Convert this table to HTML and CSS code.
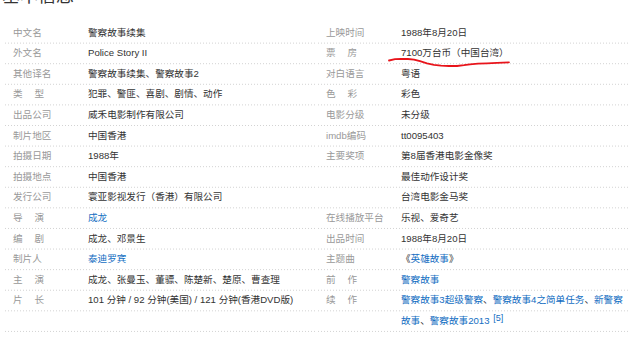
FILE: index.html
```html
<!DOCTYPE html>
<html lang="zh-CN">
<head>
<meta charset="utf-8">
<title>基本信息</title>
<link rel="stylesheet" href="styles.css">
</head>
<body>
<div class="page">
  <h2 class="title">基本信息</h2>
  <div class="basic">
    <dl class="col">
      <div class="row"><dt>中文名</dt><dd>警察故事续集</dd></div>
      <div class="row"><dt>外文名</dt><dd>Police Story II</dd></div>
      <div class="row"><dt>其他译名</dt><dd>警察故事续集、警察故事2</dd></div>
      <div class="row"><dt>类<i class="gap"></i>型</dt><dd>犯罪、警匪、喜剧、剧情、动作</dd></div>
      <div class="row"><dt>出品公司</dt><dd>威禾电影制作有限公司</dd></div>
      <div class="row"><dt>制片地区</dt><dd>中国香港</dd></div>
      <div class="row"><dt>拍摄日期</dt><dd>1988年</dd></div>
      <div class="row"><dt>拍摄地点</dt><dd>中国香港</dd></div>
      <div class="row"><dt>发行公司</dt><dd>寰亚影视发行（香港）有限公司</dd></div>
      <div class="row"><dt>导<i class="gap"></i>演</dt><dd><a href="#">成龙</a></dd></div>
      <div class="row"><dt>编<i class="gap"></i>剧</dt><dd>成龙、邓景生</dd></div>
      <div class="row"><dt>制片人</dt><dd><a href="#">泰迪罗宾</a></dd></div>
      <div class="row"><dt>主<i class="gap"></i>演</dt><dd>成龙、张曼玉、董骠、陈楚新、楚原、曹查理</dd></div>
      <div class="row"><dt>片<i class="gap"></i>长</dt><dd>101 分钟 / 92 分钟(美国) / 121 分钟(香港DVD版)</dd></div>
    </dl>
    <dl class="col">
      <div class="row"><dt>上映时间</dt><dd>1988年8月20日</dd></div>
      <div class="row"><dt>票<i class="gap"></i>房</dt><dd>7100万台币（中国台湾）</dd></div>
      <div class="row"><dt>对白语言</dt><dd>粤语</dd></div>
      <div class="row"><dt>色<i class="gap"></i>彩</dt><dd>彩色</dd></div>
      <div class="row"><dt>电影分级</dt><dd>未分级</dd></div>
      <div class="row"><dt>imdb编码</dt><dd>tt0095403</dd></div>
      <div class="row"><dt>主要奖项</dt><dd>第8届香港电影金像奖</dd></div>
      <div class="row"><dt></dt><dd>最佳动作设计奖</dd></div>
      <div class="row"><dt></dt><dd>台湾电影金马奖</dd></div>
      <div class="row"><dt>在线播放平台</dt><dd>乐视、爱奇艺</dd></div>
      <div class="row"><dt>出品时间</dt><dd>1988年8月20日</dd></div>
      <div class="row"><dt>主题曲</dt><dd>《<a href="#">英雄故事</a>》</dd></div>
      <div class="row"><dt>前<i class="gap"></i>作</dt><dd><a href="#">警察故事</a></dd></div>
      <div class="row"><dt>续<i class="gap"></i>作</dt><dd><a href="#">警察故事3超级警察</a>、<a href="#">警察故事4之简单任务</a>、<a href="#">新警察<br>故事</a>、<a href="#">警察故事2013</a> <sup><a href="#">[5]</a></sup></dd></div>
    </dl>
  </div>
  <svg class="mark" width="640" height="80" viewBox="0 0 640 80" aria-hidden="true">
    <polyline points="389,60.5 395,59.2 401,58.8 408,59 414,59.6 420,61.2 427,63.3 434,64.8 441,65.7 449,66 457,66 464,65.2 470,64.3 478,63.7 487,63.3 497,62.9 509,62.3" fill="none" stroke="#e8141b" stroke-width="1.8" stroke-linecap="round" stroke-linejoin="round"/>
  </svg>
</div>
</body>
</html>
```
FILE: styles.css
```css
html, body {
  margin: 0;
  padding: 0;
  background: #fff;
}

body {
  font-family: "Liberation Sans", "Noto Sans CJK SC", sans-serif;
  font-size: 9.6px;
  color: #333;
  overflow: hidden;
}

.page {
  position: relative;
  width: 640px;
  height: 339px;
  overflow: hidden;
}

.title {
  margin: -13px 0 0 2px;
  font-size: 18px;
  line-height: 18px;
  height: 18px;
  font-weight: normal;
  color: #333;
}

.basic {
  display: flex;
  width: 626px;
  margin: 17.7px 0 0 3px;
}

.col {
  flex: 1 1 0;
  margin: 0;
  background-image:
    linear-gradient(to right, #fff 0, #fff 2px, transparent 2px),
    linear-gradient(to bottom, transparent 0, transparent 19.6px, #d2d2d2 19.6px, #d2d2d2 20.6px);
  background-size: 3px 100%, 100% 20.6px;
  background-repeat: repeat, repeat;
}

.row {
  display: flex;
  line-height: 20.6px;
}

.row dt {
  flex: 0 0 auto;
  width: 75px;
  padding-left: 10px;
  color: #999;
  white-space: nowrap;
}

.row dd {
  flex: 1 1 auto;
  margin: 0;
  color: #333;
  white-space: nowrap;
}

.gap {
  display: inline-block;
  width: 12px;
}

a {
  color: #136ec2;
  text-decoration: none;
}

sup {
  font-size: 9px;
  line-height: 0;
  vertical-align: 3px;
  margin-left: 1px;
}

.mark {
  position: absolute;
  left: 0;
  top: 0;
  pointer-events: none;
}
```
